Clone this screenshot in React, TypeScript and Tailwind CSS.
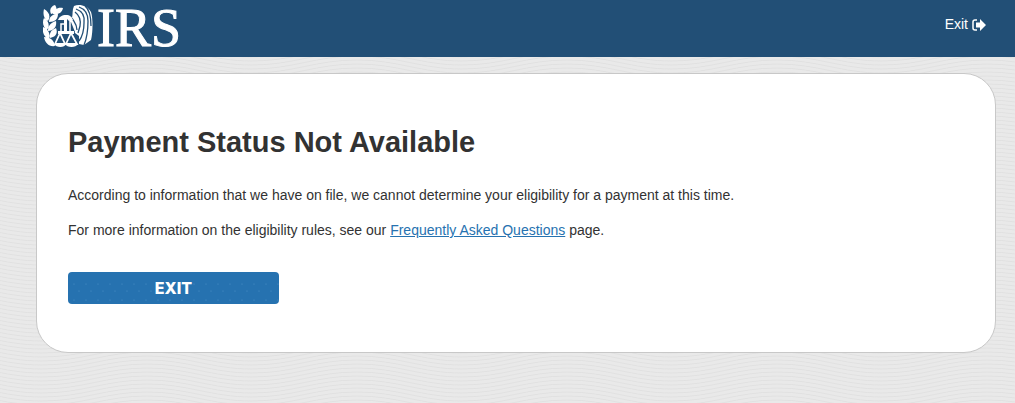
const waveRows = Array.from({ length: 18 }, (_, i) => -24 + i * 4);

function Waves() {
  return (
    <svg className="absolute inset-0 -z-10 h-full w-full" aria-hidden="true">
      <defs>
        <pattern id="waves" width="210" height="40" patternUnits="userSpaceOnUse">
          {waveRows.map((y) => (
            <path
              key={y}
              d={`M-63 ${y} C-20 ${y} 0 ${y + 13} 42 ${y + 13} S105 ${y} 147 ${y} S210 ${y + 13} 252 ${y + 13}`}
              fill="none"
              stroke="#e1e1e1"
              strokeWidth="1"
            />
          ))}
        </pattern>
      </defs>
      <rect width="100%" height="100%" fill="url(#waves)" />
    </svg>
  );
}

function Emblem() {
  return (
    <svg viewBox="0 0 50 44" className="h-11 w-[50px]" fill="#fff" aria-hidden="true">
      {/* olive branch */}
      <path d="M8 10C6 6 8 2 12 1c3 4 1 8-4 9zM10 10c1-5 5-7 10-6-1 5-5 7-10 6zM5 17C0 14 0 9 1 5c5 3 7 7 4 12zM6 18c0-5 3-8 9-8 0 5-3 8-9 8zM4 26c-4-3-5-8-3-12 5 3 6 8 3 12zM5 27c0-5 2-8 8-10 1 6-2 9-8 10zM6 35c-5-2-7-7-6-12 5 2 8 7 6 12zM7 34c-1-5 1-8 6-10 2 5 0 9-6 10zM12 42c-6 1-10-3-11-9 6 0 10 3 11 9z" />
      {/* wing: a filled outline with the gaps between feathers drawn over it */}
      <path d="M31 2c5-2 13-1 17 6 2 6 2 20 0 28l-7 5-5-1v-8l-4-3-6-12 3-3c1-4 0-8 2-12z" />
      <g fill="none" stroke="#224f76" strokeWidth="1.3">
        <path d="M36 3c6 2 9 7 9 14 0 9-1 17-4 24" />
        <path d="M33 5c6 2 9 7 8 14 0 8-2 14-5 18" />
        <path d="M32 8c4 3 6 8 5 14l-2 7" />
        <path d="M29 14c2 4 5 6 5 12" />
        <path d="M42 2c5 4 6 13 6 20" />
      </g>
      {/* head, and scales hanging from the beam */}
      <path d="M16 18h12l4 10-3 2h-4l-5 1z" fill="#224f76" />
      <path d="M15 16c1-3 4-5 8-5s6 2 7 5l-4 1-2-2v12h7v3H15v-3h6V16z" />
      <path d="M21 20h-3v8M27 18v10" fill="none" stroke="#fff" strokeWidth="1.5" />
      <path d="M17 29l-5 11h10zM28 29l-5 11h11z" fill="#224f76" stroke="#fff" strokeWidth="1.8" />
      <path d="M11 40h12c-1 4-10 4-12 0zM22 40h13c-2 4-11 4-13 0z" />
    </svg>
  );
}

function ExitIcon() {
  return (
    <svg viewBox="0 0 14 12" className="h-3.5 w-3.5 pt-0.5" aria-hidden="true">
      <path d="M5 1H3Q1 1 1 3v6q0 2 2 2h2" fill="none" stroke="#fff" strokeWidth="1.5" />
      <path d="M8 0l6 6-6 6V8.500H4V3.500h4z" fill="#fff" />
    </svg>
  );
}

function ButtonDots() {
  return (
    <svg className="absolute inset-0 h-full w-full" aria-hidden="true">
      <defs>
        <pattern id="dots" width="12" height="16" patternUnits="userSpaceOnUse">
          <circle cx="6" cy="12" r="0.6" fill="#4a8cc4" />
          <circle cx="11" cy="3" r="0.6" fill="#4a8cc4" />
        </pattern>
      </defs>
      <rect y="8" width="100%" height="100%" fill="url(#dots)" />
    </svg>
  );
}

export default function App() {
  return (
    <div className="relative isolate min-h-screen bg-[#e9e9e9] font-['Liberation_Sans',Arial,sans-serif] text-[#323232]">
      <Waves />
      <header className="flex h-[57px] items-start justify-between bg-[#224f76] pr-[29px] pl-[43px] text-white">
        <a href="#home" aria-label="IRS" className="flex items-start gap-1">
          <span className="pt-1">
            <Emblem />
          </span>
          <span className="font-['Liberation_Serif','Times_New_Roman',serif] text-[54px] leading-[56px] [-webkit-text-stroke:1px_white]">IRS</span>
        </a>
        <a href="#exit" className="flex items-center gap-1 pt-3.5 text-sm">
          Exit
          <ExitIcon />
        </a>
      </header>
      <main className="mt-4 mr-[19px] ml-9 rounded-[32px] border border-[#c8c8c8] bg-white px-[31px] pt-12 pb-12">
        <h1 className="text-[29px] leading-10 font-bold">Payment Status Not Available</h1>
        <p className="mt-[23px] text-sm leading-5">
          According to information that we have on file, we cannot determine your eligibility for a payment at this time.
        </p>
        <p className="mt-[15px] text-sm leading-5">
          For more information on the eligibility rules, see our{" "}
          <a href="#faq" className="text-[#2672b0] underline">Frequently Asked Questions</a> page.
        </p>
        <button type="button" className="relative mt-8 block h-8 w-[211px] overflow-hidden rounded bg-[#2672b0] font-[Inter,sans-serif] text-base font-extrabold text-white">
          <ButtonDots />
          <span className="relative">EXIT</span>
        </button>
      </main>
    </div>
  );
}
